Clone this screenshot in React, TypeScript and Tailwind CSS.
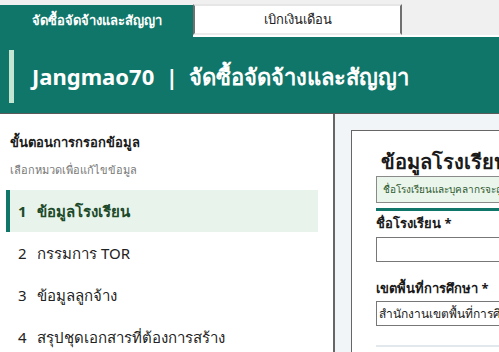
import React from 'react';

const steps = [
  { no: 1, label: 'ข้อมูลโรงเรียน' },
  { no: 2, label: 'กรรมการ TOR' },
  { no: 3, label: 'ข้อมูลลูกจ้าง' },
  { no: 4, label: 'สรุปชุดเอกสารที่ต้องการสร้าง' },
];

export default function App() {
  const active = 1;

  return (
    <div className="w-[499px] h-[352px] overflow-hidden flex flex-col bg-white font-['Noto_Sans','Liberation_Sans',sans-serif]">
      {/* Tabs */}
      <div className="flex h-[37px] shrink-0 bg-[#f0f0f0]">
        <div className="mt-[5px] h-[32px] w-[193px] bg-[#0f7669] flex items-center justify-center text-white text-[13px] font-bold">
          จัดซื้อจัดจ้างและสัญญา
        </div>
        <div className="flex-1 flex border-b-2 border-white">
          <div className="mt-[4px] h-[31px] w-[209px] bg-white border-x-2 border-x-[#707070] border-t-2 border-t-[#e6e6e6] border-b-2 border-b-[#ececec] flex items-center justify-center text-[13px] text-[#222]">
            เบิกเงินเดือน
          </div>
        </div>
      </div>

      {/* Header */}
      <div className="h-[77px] shrink-0 bg-[#0f7669] border-b border-[#5a5a5a] flex items-start pl-[9px] pt-[13px]">
        <div className="w-[5px] h-[53px] bg-[#c3e6d3]" />
        <h1 className="ml-[18px] mt-[11px] text-white text-[22px] font-bold leading-[30px] whitespace-nowrap">
          Jangmao70&nbsp; | &nbsp;<span className="font-semibold">จัดซื้อจัดจ้างและสัญญา</span>
        </h1>
      </div>

      {/* Body */}
      <div className="flex flex-1 min-h-0">
        <aside className="w-[335px] shrink-0 bg-white border-r-2 border-[#666]">
          <div className="pl-[10px] pt-[19px]">
            <div className="text-[13px] font-bold text-[#1a1a1a] leading-[18px]">ขั้นตอนการกรอกข้อมูล</div>
            <div className="mt-[11px] text-[11px] text-[#777] leading-[16px]">เลือกหมวดเพื่อแก้ไขข้อมูล</div>
          </div>
          <ul className="mt-[12px] ml-[6px] mr-[15px]">
            {steps.map((s) =>
              s.no === active ? (
                <li
                  key={s.no}
                  className="h-[42px] flex items-center bg-[#e8f4eb] border-l-4 border-[#0f7669] pl-[8px] text-[15px] font-bold text-[#1d4a2a] whitespace-nowrap"
                >
                  <span className="w-[19px]">{s.no}</span>
                  {s.label}
                </li>
              ) : (
                <li
                  key={s.no}
                  className="h-[42px] flex items-center pl-[12px] text-[15px] text-[#222] whitespace-nowrap"
                >
                  <span className="w-[19px]">{s.no}</span>
                  {s.label}
                </li>
              )
            )}
          </ul>
        </aside>

        <main className="flex-1 min-w-0 bg-[#f1f5f8] pl-[16px] pt-[16px] overflow-hidden">
          <div className="w-[320px] h-[260px] bg-white border-[1.5px] border-[#666] pl-[24px] pt-[16px]">
            <h2 className="pl-[5px] text-[20px] font-bold text-[#1a1a1a] leading-[30px] whitespace-nowrap">ข้อมูลโรงเรียน</h2>
            <div className="mt-[-1px] h-[27px] bg-[#eaf5ec] border border-[#8a8a8a] flex items-center pl-[6px] text-[10px] text-[#2f5a2f] whitespace-nowrap overflow-hidden">
              ชื่อโรงเรียนและบุคลากรจะถูกนำไปใช้ในเอกสารทุกชุด
            </div>
            <div className="mt-[5px] h-[3px] bg-[#0f7669]" />
            <label className="block mt-[2px] text-[13px] font-bold text-[#1a1a1a] leading-[20px]">ชื่อโรงเรียน *</label>
            <div className="mt-[4px] h-[25px] border-[1.5px] border-[#777] bg-white" />
            <label className="block mt-[16px] text-[13px] font-bold text-[#1a1a1a] leading-[20px]">เขตพื้นที่การศึกษา *</label>
            <div className="mt-[3px] h-[25px] border-[1.5px] border-[#777] bg-white flex items-center pl-[2px] text-[12px] text-[#222] whitespace-nowrap overflow-hidden">
              สำนักงานเขตพื้นที่การศึกษาประถมศึกษา
            </div>
            <div className="mt-[19px] h-[2px] bg-[#e3e8ec]" />
          </div>
        </main>
      </div>
    </div>
  );
}
